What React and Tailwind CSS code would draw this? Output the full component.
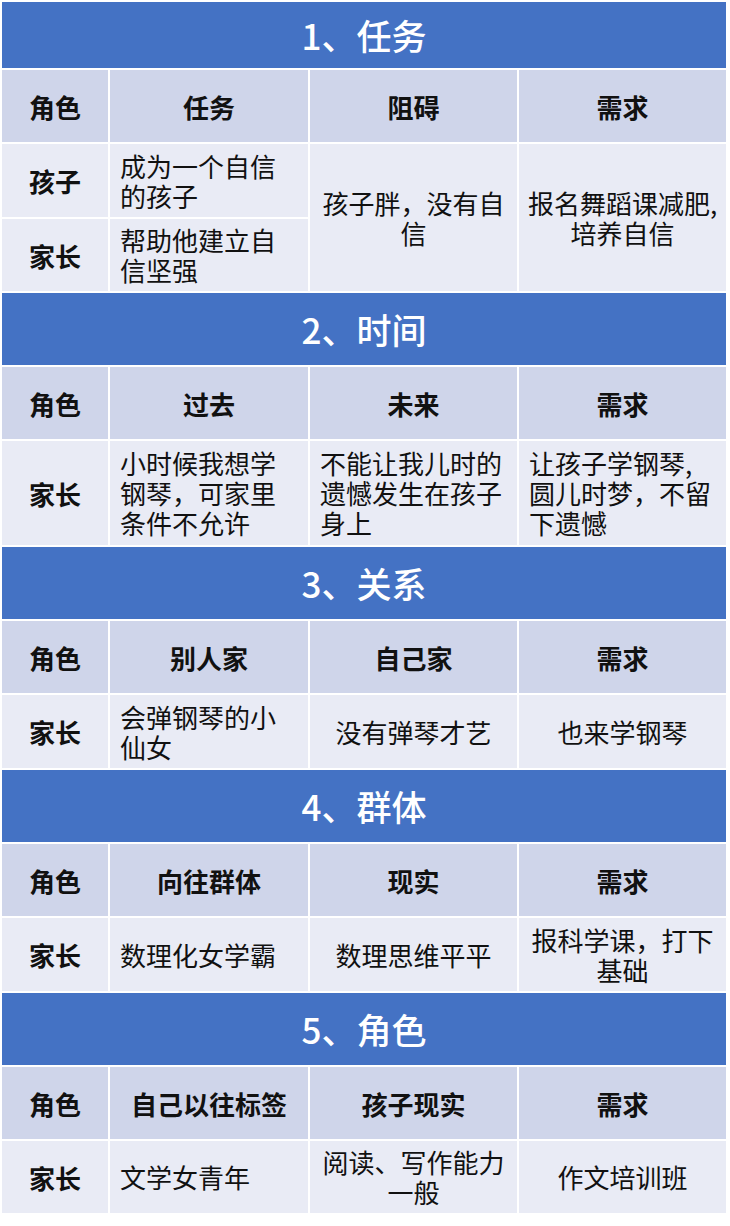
import React from 'react';

const FONT = { fontFamily: '"Noto Sans CJK SC", "Noto Sans", sans-serif' };

// align: 'l' = left, 'c' = center
const sections = [
  {
    title: '1、任务',
    titleH: 'h-[66px]',
    heads: ['角色', '任务', '阻碍', '需求'],
    custom: true,
  },
  {
    title: '2、时间',
    heads: ['角色', '过去', '未来', '需求'],
    rowH: 'h-[104px]',
    row: [
      ['小时候我想学\n钢琴，可家里\n条件不允许', 'l'],
      ['不能让我儿时的\n遗憾发生在孩子\n身上', 'l'],
      ['让孩子学钢琴,\n圆儿时梦，不留\n下遗憾', 'l'],
    ],
  },
  {
    title: '3、关系',
    heads: ['角色', '别人家', '自己家', '需求'],
    rowH: 'h-[73px]',
    row: [
      ['会弹钢琴的小\n仙女', 'l'],
      ['没有弹琴才艺', 'c'],
      ['也来学钢琴', 'c'],
    ],
  },
  {
    title: '4、群体',
    heads: ['角色', '向往群体', '现实', '需求'],
    rowH: 'h-[73px]',
    row: [
      ['数理化女学霸', 'l'],
      ['数理思维平平', 'c'],
      ['报科学课，打下\n基础', 'c'],
    ],
  },
  {
    title: '5、角色',
    heads: ['角色', '自己以往标签', '孩子现实', '需求'],
    rowH: 'h-[72px]',
    row: [
      ['文学女青年', 'l'],
      ['阅读、写作能力\n一般', 'c'],
      ['作文培训班', 'c'],
    ],
  },
];

function Cell({ text, align, className = '' }) {
  return (
    <div
      className={`bg-[#e9ebf5] flex items-center px-[10px] text-[26px] leading-[30px] text-[#111] whitespace-pre ${
        align === 'c' ? 'justify-center text-center' : 'justify-start text-left'
      } ${className}`}
    >
      {text}
    </div>
  );
}

function Section({ s }) {
  return (
    <div className="grid grid-cols-[106px_198px_207px_207px] gap-[2px]">
      <div
        className={`col-span-4 bg-[#4472c4] flex items-center justify-center text-white text-[35px] font-medium ${
          s.titleH || 'h-[72px]'
        }`}
      >
        {s.title}
      </div>
      {s.heads.map((h) => (
        <div
          key={h}
          className="h-[72px] bg-[#cfd5ea] flex items-center justify-center text-[26px] font-bold text-[#111]"
        >
          {h}
        </div>
      ))}
      {s.custom ? (
        <>
          <div className="h-[73px] bg-[#e9ebf5] flex items-center justify-center text-[26px] font-bold text-[#111]">
            孩子
          </div>
          <Cell text={'成为一个自信\n的孩子'} align="l" />
          <Cell text={'孩子胖，没有自\n信'} align="c" className="row-span-2" />
          <Cell text={'报名舞蹈课减肥,\n培养自信'} align="c" className="row-span-2 px-0" />
          <div className="h-[72px] bg-[#e9ebf5] flex items-center justify-center text-[26px] font-bold text-[#111]">
            家长
          </div>
          <Cell text={'帮助他建立自\n信坚强'} align="l" />
        </>
      ) : (
        <>
          <div
            className={`${s.rowH} bg-[#e9ebf5] flex items-center justify-center text-[26px] font-bold text-[#111]`}
          >
            家长
          </div>
          {s.row.map(([t, a], i) => (
            <Cell key={i} text={t} align={a} />
          ))}
        </>
      )}
    </div>
  );
}

export default function App() {
  return (
    <div className="w-[730px] h-[1226px] bg-white pt-[2px] pl-[2px] flex flex-col gap-[2px]" style={FONT}>
      {sections.map((s) => (
        <Section key={s.title} s={s} />
      ))}
    </div>
  );
}
